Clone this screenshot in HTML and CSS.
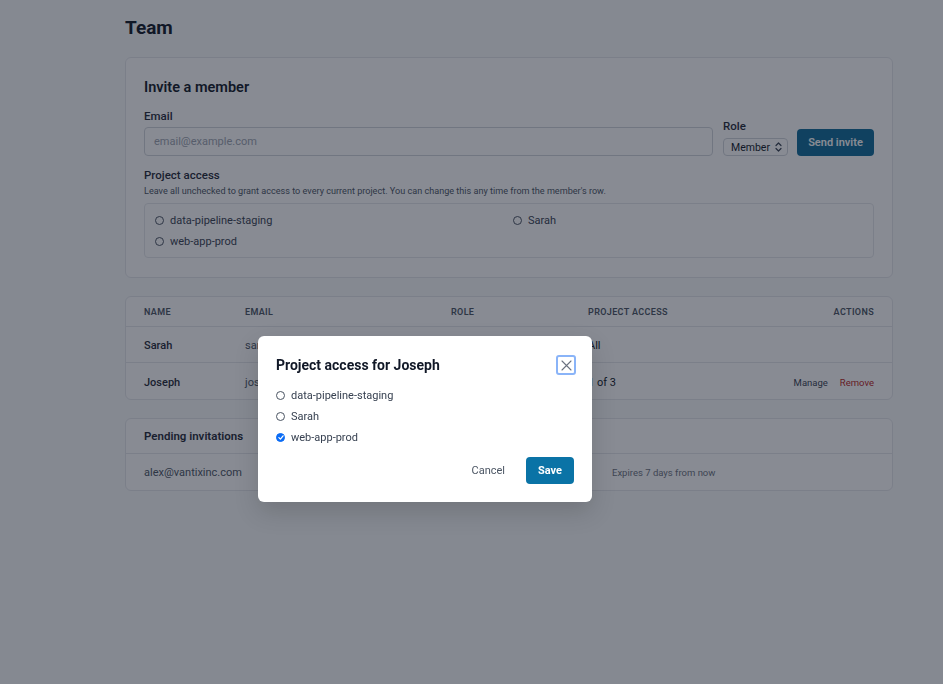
FILE: index.html
```html
<!DOCTYPE html>
<html lang="en">
<head>
  <meta charset="UTF-8" />
  <meta name="viewport" content="width=device-width, initial-scale=1.0" />
  <title>Team</title>
  <link rel="stylesheet" href="styles.css">
</head>
<body>
  <main class="page">
    <h1 class="page-title">Team</h1>

    <section class="card invite">
      <h2 class="card-title">Invite a member</h2>
      <div class="invite-row">
        <div class="field field-email">
          <label class="field-label" for="email">Email</label>
          <input id="email" class="text-input" type="email" placeholder="email@example.com">
        </div>
        <div class="field field-role">
          <label class="field-label role-label" for="role">Role</label>
          <div class="select" id="role">
            <span>Member</span>
            <svg width="7" height="10" viewBox="0 0 7 10" fill="none" stroke="#374151" stroke-width="1.2" stroke-linecap="round" stroke-linejoin="round"><path d="M1 3.5 3.5 1 6 3.5M1 6.5 3.5 9 6 6.5"/></svg>
          </div>
        </div>
        <button class="btn btn-primary">Send invite</button>
      </div>

      <div class="field-label access-label">Project access</div>
      <p class="help">Leave all unchecked to grant access to every current project. You can change this any time from the member's row.</p>
      <div class="project-box">
        <label class="check"><span class="box"></span>data-pipeline-staging</label>
        <label class="check"><span class="box"></span>Sarah</label>
        <label class="check"><span class="box"></span>web-app-prod</label>
      </div>
    </section>

    <section class="card members">
      <div class="member-row member-head">
        <span>Name</span>
        <span>Email</span>
        <span>Role</span>
        <span>Project access</span>
        <span class="actions">Actions</span>
      </div>
      <div class="member-row">
        <span class="name">Sarah</span>
        <span class="muted">sarah@vantixinc.com</span>
        <span></span>
        <span>All</span>
        <span class="actions"></span>
      </div>
      <div class="member-row row-last">
        <span class="name">Joseph</span>
        <span class="muted">joseph@vantixinc.com</span>
        <span></span>
        <span>1 of 3</span>
        <span class="actions"><a class="link">Manage</a><a class="link link-danger">Remove</a></span>
      </div>
    </section>

    <section class="card pending">
      <div class="pending-head">Pending invitations</div>
      <div class="pending-row">
        <span class="muted">alex@vantixinc.com</span>
        <span class="expires">Expires 7 days from now</span>
      </div>
    </section>
  </main>

  <div class="overlay">
    <div class="modal" role="dialog">
      <div class="modal-head">
        <h3 class="modal-title">Project access for Joseph</h3>
        <button class="close" aria-label="Close">
          <svg width="11" height="11" viewBox="0 0 11 11" fill="none" stroke="#6b7280" stroke-width="1.1" stroke-linecap="round"><path d="M1 1 10 10M10 1 1 10"/></svg>
        </button>
      </div>
      <div class="modal-list">
        <label class="check"><span class="box"></span>data-pipeline-staging</label>
        <label class="check"><span class="box"></span>Sarah</label>
        <label class="check"><span class="box box-on"><svg width="6" height="5" viewBox="0 0 7 6" fill="none" stroke="#fff" stroke-width="1.5" stroke-linecap="round" stroke-linejoin="round"><path d="M1 3.2 2.8 5 6 1"/></svg></span>web-app-prod</label>
      </div>
      <div class="modal-foot">
        <button class="btn btn-ghost">Cancel</button>
        <button class="btn btn-save">Save</button>
      </div>
    </div>
  </div>
</body>
</html>
```

FILE: styles.css
```css
body {
  margin: 0;
  background: #f9fafb;
  color: #111827;
  font-family: Roboto, "Noto Sans", sans-serif;
  font-size: 13px;
}

.page {
  width: 768px;
  margin-left: 125px;
  padding-top: 17px;
}

.page-title {
  margin: 0 0 18px;
  font-size: 19px;
  font-weight: 700;
  line-height: 22px;
}

.card {
  background: #fff;
  border: 1px solid #e5e7eb;
  border-radius: 6px;
  margin-bottom: 18px;
}

.invite {
  padding: 20px 18px 19px;
}

.card-title {
  margin: 0 0 11px;
  font-size: 14.5px;
  font-weight: 600;
  line-height: 20px;
}

.invite-row {
  display: flex;
  align-items: flex-end;
}

.field {
  display: flex;
  flex-direction: column;
}

.field-email {
  flex: 1;
  margin-right: 10px;
}

.field-role {
  margin-right: 9px;
}

.field-label {
  font-size: 11.5px;
  font-weight: 500;
  color: #1f2937;
  margin-bottom: 4px;
  line-height: 14px;
}

.role-label {
  margin-bottom: 5px;
}

.text-input {
  height: 29px;
  box-sizing: border-box;
  border: 1px solid #d1d5db;
  border-radius: 4px;
  padding: 0 9px;
  font: inherit;
  font-size: 11px;
}

.text-input::placeholder {
  color: #9ca3af;
}

.select {
  display: flex;
  align-items: center;
  justify-content: space-between;
  width: 65px;
  height: 18px;
  box-sizing: border-box;
  padding: 0 5px 0 7px;
  border: 1px solid #d1d5db;
  border-radius: 4px;
  font-size: 10.5px;
  color: #111827;
}

.btn {
  font: inherit;
  border: none;
  cursor: pointer;
}

.btn-primary {
  width: 77px;
  height: 27px;
  padding: 0;
  background: #0e6b98;
  color: #fff;
  font-size: 11px;
  font-weight: 600;
  border-radius: 4px;
}

.access-label {
  margin-top: 12px;
  margin-bottom: 3px;
}

.help {
  margin: 0 0 5px;
  font-size: 9.1px;
  color: #4b5563;
  line-height: 13px;
}

.project-box {
  display: grid;
  grid-template-columns: 1fr 1fr;
  gap: 6px 8px;
  padding: 9px 10px 8px;
  border: 1px solid #e5e7eb;
  border-radius: 4px;
}

.check {
  display: flex;
  align-items: center;
  gap: 6px;
  font-size: 11px;
  color: #374151;
  line-height: 15px;
}

.box {
  width: 9px;
  height: 9px;
  box-sizing: border-box;
  border: 1px solid #4b5563;
  border-radius: 50%;
  display: flex;
  align-items: center;
  justify-content: center;
  flex-shrink: 0;
}

.box-on {
  background: #0b6cf5;
  border-color: #0b6cf5;
}

.member-row {
  display: grid;
  grid-template-columns: 101px 206px 137px 1fr auto;
  align-items: center;
  box-sizing: border-box;
  padding: 2px 18px 0;
  height: 36px;
  border-top: 1px solid #e5e7eb;
  font-size: 11px;
}

.member-head {
  height: 29px;
  padding-top: 0;
  border-top: none;
  font-size: 9px;
  font-weight: 600;
  color: #4b5563;
  text-transform: uppercase;
  letter-spacing: 0.04em;
}

.row-last {
  height: 37px;
}

.name {
  color: #1f2937;
  font-weight: 500;
}

.muted {
  color: #4b5563;
}

.actions {
  display: flex;
  gap: 12px;
  justify-content: flex-end;
}

.link {
  font-size: 9.5px;
  color: #374151;
}

.link-danger {
  color: #b91c1c;
}

.pending-head {
  padding: 0 18px;
  height: 34px;
  line-height: 34px;
  font-size: 11.5px;
  font-weight: 600;
  color: #1f2937;
  border-bottom: 1px solid #e5e7eb;
}

.pending-row {
  display: grid;
  grid-template-columns: 468px 1fr;
  align-items: center;
  padding: 0 18px;
  height: 36px;
  font-size: 11px;
}

.expires {
  font-size: 9.5px;
  color: #6b7280;
}

.overlay {
  position: fixed;
  inset: 0;
  background: rgba(17, 24, 39, 0.5);
}

.modal {
  position: absolute;
  left: 258px;
  top: 336px;
  width: 334px;
  box-sizing: border-box;
  padding: 19px 18px 18px;
  background: #fff;
  border-radius: 6px;
  box-shadow: 0 10px 25px rgba(0, 0, 0, 0.15);
}

.modal-head {
  display: flex;
  align-items: center;
  justify-content: space-between;
  margin-bottom: 13px;
}

.modal-title {
  margin: 0;
  font-size: 14px;
  font-weight: 700;
}

.close {
  width: 20px;
  height: 20px;
  margin-right: -2px;
  display: flex;
  align-items: center;
  justify-content: center;
  padding: 0;
  background: #fff;
  border: 2.5px solid #8ab4f8;
  border-radius: 3px;
}

.modal-list {
  display: flex;
  flex-direction: column;
  gap: 6px;
}

.modal-foot {
  display: flex;
  justify-content: flex-end;
  align-items: center;
  gap: 21px;
  margin-top: 12px;
}

.btn-ghost {
  background: none;
  padding: 0;
  font-size: 11px;
  color: #4b5563;
}

.btn-save {
  height: 27px;
  padding: 0 12px;
  background: #0a73a6;
  color: #fff;
  font-size: 11px;
  font-weight: 700;
  border-radius: 4px;
}
```
